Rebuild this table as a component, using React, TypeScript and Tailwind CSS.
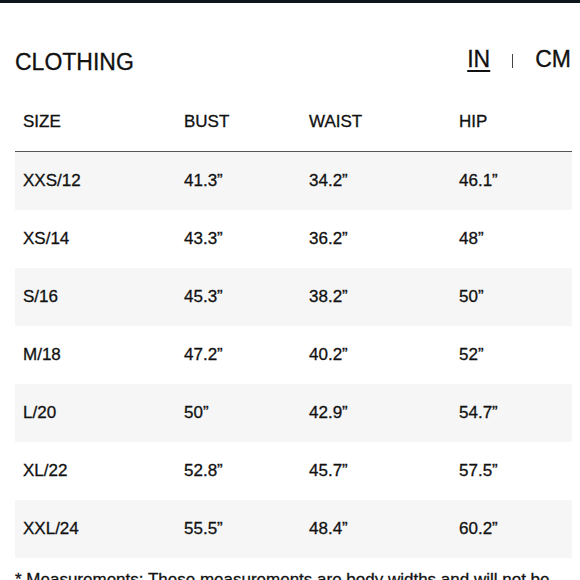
import React from "react";

const rows = [
  ["XXS/12", "41.3”", "34.2”", "46.1”"],
  ["XS/14", "43.3”", "36.2”", "48”"],
  ["S/16", "45.3”", "38.2”", "50”"],
  ["M/18", "47.2”", "40.2”", "52”"],
  ["L/20", "50”", "42.9”", "54.7”"],
  ["XL/22", "52.8”", "45.7”", "57.5”"],
  ["XXL/24", "55.5”", "48.4”", "60.2”"],
];

export default function App() {
  return (
    <div
      className="w-[580px] h-[580px] overflow-hidden bg-white text-[#111111] [-webkit-text-stroke:0.3px_#111111]"
      style={{ fontFamily: '"Liberation Sans", Arial, sans-serif' }}
    >
      <div className="h-[3px] bg-[#0e151b]" />
      <div className="pl-[15px] pr-[8px]">
        <div className="mt-[42px] flex items-start justify-between">
          <div className="pt-[3px] text-[23px] leading-[28px]">CLOTHING</div>
          <div className="flex items-center text-[23px] leading-[28px] pr-[1px]">
            <span className="underline underline-offset-[3px] decoration-[1.5px]">IN</span>
            <span className="mx-[22px] mt-[4px] block h-[14px] w-px bg-[#444444]" />
            <span>CM</span>
          </div>
        </div>
        <div className="mt-[36px] grid grid-cols-[161px_125px_150px_1fr] pl-[8px] pb-[19px] text-[17px] leading-[20px] border-b-[1.5px] border-[#555555]">
          <div>SIZE</div>
          <div>BUST</div>
          <div>WAIST</div>
          <div>HIP</div>
        </div>
        <div className="flex flex-col">
          {rows.map((r, i) => (
            <div
              key={r[0]}
              className={`grid h-[58px] grid-cols-[161px_125px_150px_1fr] items-center pl-[8px] text-[17px] leading-[20px] ${
                i % 2 === 0 ? "bg-[#f6f6f6]" : "bg-white"
              }`}
            >
              <div>{r[0]}</div>
              <div>{r[1]}</div>
              <div>{r[2]}</div>
              <div>{r[3]}</div>
            </div>
          ))}
        </div>
        <div className="mt-[12px] text-[17px] leading-[20px]">
          * Measurements: These measurements are body widths and will not be the same as garment measurements.
        </div>
      </div>
    </div>
  );
}
